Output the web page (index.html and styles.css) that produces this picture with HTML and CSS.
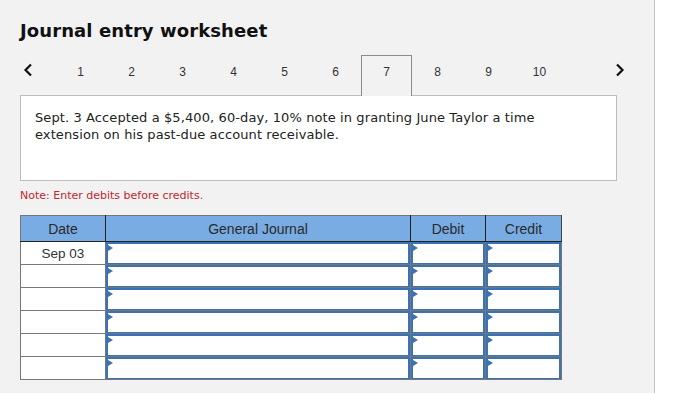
FILE: index.html
```html
<!DOCTYPE html>
<html>
<head>
<meta charset="utf-8">
<link rel="stylesheet" href="styles.css">
</head>
<body>
<div class="page">
  <main class="panel">
    <h1 class="title">Journal entry worksheet</h1>
    <nav class="tabs">
      <span class="arrow">
        <svg width="10" height="14" viewBox="0 0 10 14"><path d="M8 1.5 L2.5 7 L8 12.5" fill="none" stroke="#111" stroke-width="2.2"/></svg>
      </span>
      <span class="tab">1</span>
      <span class="tab">2</span>
      <span class="tab">3</span>
      <span class="tab">4</span>
      <span class="tab">5</span>
      <span class="tab">6</span>
      <span class="tab active">7</span>
      <span class="tab">8</span>
      <span class="tab">9</span>
      <span class="tab">10</span>
      <span class="arrow next">
        <svg width="10" height="14" viewBox="0 0 10 14"><path d="M2 1.5 L7.5 7 L2 12.5" fill="none" stroke="#111" stroke-width="2.2"/></svg>
      </span>
    </nav>
    <section class="question">
      <p>Sept. 3 Accepted a $5,400, 60-day, 10% note in granting June Taylor a time extension on his past-due account receivable.</p>
    </section>
    <p class="note">Note: Enter debits before credits.</p>
    <table class="journal">
      <colgroup>
        <col class="c-date"><col class="c-gj"><col class="c-num"><col class="c-num2">
      </colgroup>
      <thead>
        <tr>
          <th>Date</th>
          <th>General Journal</th>
          <th>Debit</th>
          <th>Credit</th>
        </tr>
      </thead>
      <tbody>
        <tr><td class="date">Sep 03</td><td class="inp"><div class="box"></div></td><td class="inp"><div class="box"></div></td><td class="inp"><div class="box"></div></td></tr>
        <tr><td class="date"></td><td class="inp"><div class="box"></div></td><td class="inp"><div class="box"></div></td><td class="inp"><div class="box"></div></td></tr>
        <tr><td class="date"></td><td class="inp"><div class="box"></div></td><td class="inp"><div class="box"></div></td><td class="inp"><div class="box"></div></td></tr>
        <tr><td class="date"></td><td class="inp"><div class="box"></div></td><td class="inp"><div class="box"></div></td><td class="inp"><div class="box"></div></td></tr>
        <tr><td class="date"></td><td class="inp"><div class="box"></div></td><td class="inp"><div class="box"></div></td><td class="inp"><div class="box"></div></td></tr>
        <tr><td class="date"></td><td class="inp"><div class="box"></div></td><td class="inp"><div class="box"></div></td><td class="inp"><div class="box"></div></td></tr>
      </tbody>
    </table>
  </main>
  <aside class="side"></aside>
</div>
</body>
</html>
```

FILE: styles.css
```css
html, body {
  margin: 0;
  padding: 0;
  background: #ffffff;
}
.page {
  display: flex;
  width: 681px;
  height: 393px;
  overflow: hidden;
}
.panel {
  width: 655px;
  flex: none;
  background: #f2f2f2;
  border-right: 1px solid #c6c6c6;
  padding: 0 0 0 20px;
  box-sizing: border-box;
}
.side {
  flex: 1;
  background: #fff;
}
.title {
  margin: 20px 0 0 0;
  font-family: "DejaVu Sans", Verdana, sans-serif;
  font-size: 18px;
  font-weight: bold;
  line-height: 22px;
  color: #111;
  letter-spacing: 0.1px;
}
.tabs {
  display: flex;
  margin-top: 13px;
  height: 40px;
  align-items: flex-start;
}
.arrow {
  width: 35px;
  height: 40px;
  display: flex;
  padding-top: 8px;
  box-sizing: border-box;
  padding-left: 3px;
}
.arrow.next {
  margin-left: 47px;
}
.tab {
  width: 51px;
  height: 40px;
  box-sizing: border-box;
  text-align: center;
  font-family: "Liberation Sans", Arial, sans-serif;
  font-size: 12px;
  color: #333;
  padding-top: 9px;
  border: 1px solid transparent;
}
.tab.active {
  border-color: #8c8c8c;
  border-bottom: none;
  height: 41px;
  position: relative;
  z-index: 1;
  background: #f2f2f2;
}
.question {
  width: 597px;
  height: 86px;
  box-sizing: border-box;
  background: #fff;
  border: 1px solid #bdbdbd;
  padding: 13px 14px;
}
.question p {
  margin: 0;
  font-family: "DejaVu Sans", Verdana, sans-serif;
  font-size: 13px;
  letter-spacing: 0.1px;
  line-height: 17px;
  color: #222;
}
.note {
  margin: 8px 0 0 0;
  font-family: "DejaVu Sans", Verdana, sans-serif;
  font-size: 11px;
  line-height: 14px;
  color: #c1272d;
}
.journal {
  margin-top: 12px;
  border-collapse: collapse;
  font-family: "Liberation Sans", Arial, sans-serif;
  font-size: 13px;
  color: #333;
  table-layout: fixed;
  width: 541px;
}
.c-date { width: 85px; }
.c-gj { width: 305px; }
.c-num { width: 75px; }
.c-num2 { width: 76px; }
.journal th {
  background: #78ace3;
  height: 25px;
  padding: 0;
  font-size: 14px;
  font-weight: normal;
  color: #2a2a2a;
  border: 1px solid #222;
  border-top-color: #777;
  border-bottom: 1px solid #222;
}
.journal th:first-child {
  border-left-color: #777;
}
.journal th:last-child {
  border-right-color: #444;
}
.journal td {
  height: 22px;
  padding: 0;
  border: 1px solid #777;
  background: #fff;
}
.journal td.date {
  text-align: center;
  vertical-align: top;
  padding-top: 4px;
  height: 18px;
  font-size: 13.5px;
}
.journal td.inp {
  position: relative;
}
.box {
  height: 22px;
  box-sizing: border-box;
  border: 2px solid #3b72b6;
  border-top-width: 2px;
  border-bottom-width: 1px;
  position: relative;
}
.box::before {
  content: "";
  position: absolute;
  left: 0;
  top: 1px;
  border-left: 5px solid #3b72b6;
  border-top: 3px solid transparent;
  border-bottom: 3px solid transparent;
}
```
